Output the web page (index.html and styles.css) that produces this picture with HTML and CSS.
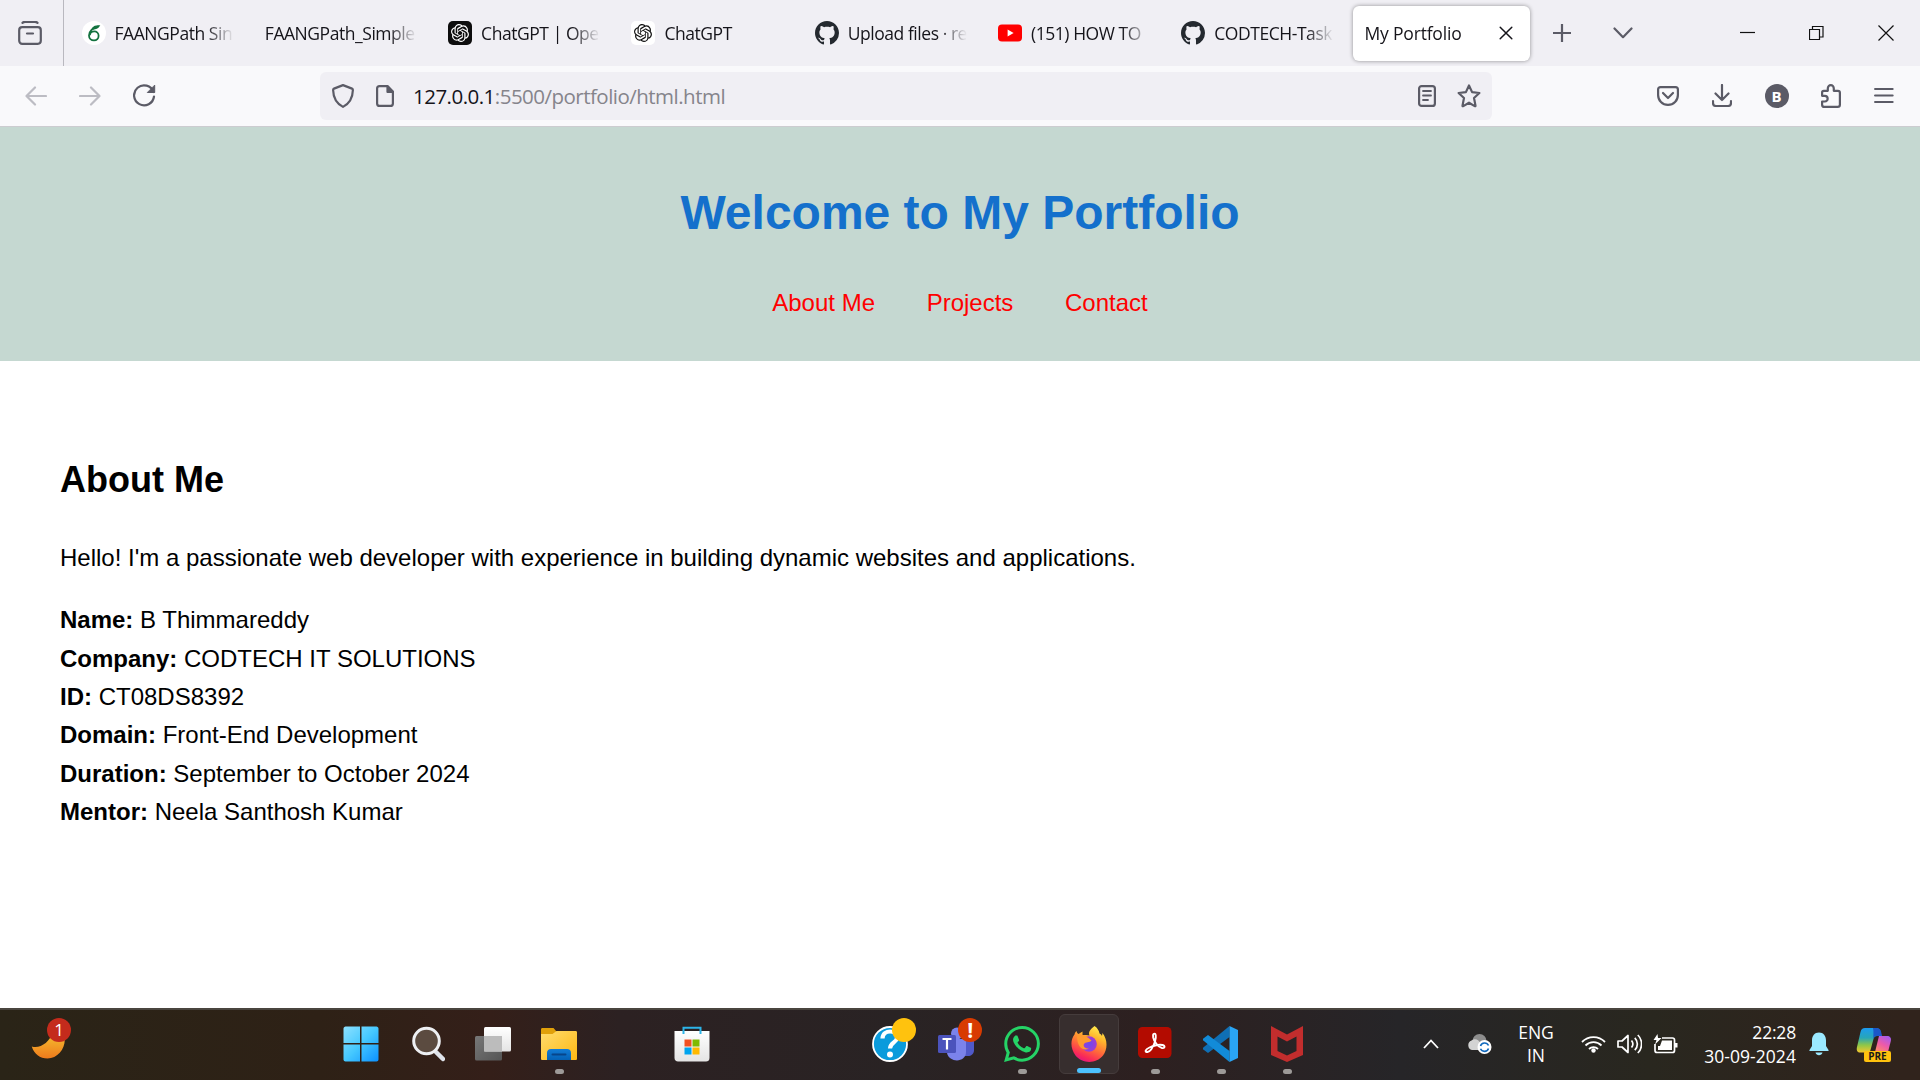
FILE: index.html
```html
<!DOCTYPE html>
<html lang="en">
<head>
<meta charset="utf-8">
<title>My Portfolio</title>
<link rel="stylesheet" href="styles.css">
</head>
<body>
<svg class="defs" aria-hidden="true">
  <defs>
    <symbol id="knot" viewBox="0 0 24 24">
      <path d="M22.28 9.82a5.98 5.98 0 0 0-.52-4.91 6.05 6.05 0 0 0-6.51-2.9A6.07 6.07 0 0 0 4.98 4.18a5.98 5.98 0 0 0-4 2.9 6.05 6.05 0 0 0 .74 7.1 5.98 5.98 0 0 0 .51 4.91 6.05 6.05 0 0 0 6.52 2.9A5.98 5.98 0 0 0 13.26 24a6.06 6.06 0 0 0 5.77-4.21 5.99 5.99 0 0 0 4-2.9 6.06 6.06 0 0 0-.75-7.07zm-9.02 12.61a4.48 4.48 0 0 1-2.88-1.04l.14-.08 4.78-2.76a.8.8 0 0 0 .39-.68v-6.74l2.02 1.17a.07.07 0 0 1 .04.05v5.58a4.5 4.5 0 0 1-4.49 4.5zm-9.66-4.13a4.47 4.47 0 0 1-.54-3.01l.14.09 4.78 2.76a.77.77 0 0 0 .78 0l5.84-3.37v2.33a.08.08 0 0 1-.03.06L9.74 19.95a4.5 4.5 0 0 1-6.14-1.65zM2.34 7.9a4.49 4.49 0 0 1 2.37-1.98V11.6a.77.77 0 0 0 .39.68l5.81 3.35-2.02 1.17a.08.08 0 0 1-.07 0l-4.83-2.79A4.5 4.5 0 0 1 2.34 7.87zm16.6 3.85-5.84-3.39L15.12 7.2a.08.08 0 0 1 .07 0l4.83 2.79a4.49 4.49 0 0 1-.68 8.1v-5.67a.79.79 0 0 0-.4-.67zm2.01-3.02-.14-.09-4.77-2.78a.78.78 0 0 0-.79 0L9.41 9.23V6.9a.07.07 0 0 1 .03-.06l4.83-2.79a4.5 4.5 0 0 1 6.68 4.66zM8.31 12.86l-2.02-1.16a.08.08 0 0 1-.04-.06V6.07a4.5 4.5 0 0 1 7.38-3.45l-.14.08-4.78 2.76a.8.8 0 0 0-.4.68zm1.1-2.36 2.6-1.5 2.6 1.5v3l-2.6 1.5-2.6-1.5z"/>
    </symbol>
    <symbol id="octocat" viewBox="0 0 16 16">
      <path d="M8 0C3.58 0 0 3.58 0 8c0 3.54 2.29 6.53 5.47 7.59.4.07.55-.17.55-.38 0-.19-.01-.82-.01-1.49-2.01.37-2.53-.49-2.69-.94-.09-.23-.48-.94-.82-1.13-.28-.15-.68-.52-.01-.53.63-.01 1.08.58 1.23.82.72 1.21 1.87.87 2.33.66.07-.52.28-.87.51-1.07-1.78-.2-3.64-.89-3.64-3.95 0-.87.31-1.59.82-2.15-.08-.2-.36-1.02.08-2.12 0 0 .67-.21 2.2.82.64-.18 1.32-.27 2-.27s1.36.09 2 .27c1.53-1.04 2.2-.82 2.2-.82.44 1.1.16 1.92.08 2.12.51.56.82 1.27.82 2.15 0 3.07-1.87 3.75-3.65 3.95.29.25.54.73.54 1.48 0 1.07-.01 1.93-.01 2.2 0 .21.15.46.55.38A8.01 8.01 0 0 0 16 8c0-4.42-3.58-8-8-8z"/>
    </symbol>
    <linearGradient id="moonFill" x1="0" y1="0" x2="0" y2="1"><stop offset="0" stop-color="#f5c030"/><stop offset="1" stop-color="#ee7a1c"/></linearGradient>
    <linearGradient id="winFill" gradientUnits="userSpaceOnUse" x1="0" y1="0" x2="36" y2="36"><stop offset="0" stop-color="#8fe2ff"/><stop offset=".5" stop-color="#45c8ff"/><stop offset="1" stop-color="#0a8fff"/></linearGradient>
    <linearGradient id="greyFill" x1="0" y1="0" x2="1" y2="1"><stop offset="0" stop-color="#777"/><stop offset="1" stop-color="#555"/></linearGradient>
    <linearGradient id="folderFill" x1="0" y1="0" x2="1" y2="1"><stop offset="0" stop-color="#ffdc6e"/><stop offset="1" stop-color="#fdb813"/></linearGradient>
    <linearGradient id="folderTab" x1="0" y1="0" x2="0" y2="1"><stop offset="0" stop-color="#127cd6"/><stop offset="1" stop-color="#0461b5"/></linearGradient>
    <linearGradient id="bagFill" x1="0" y1="0" x2="0" y2="1"><stop offset="0" stop-color="#fff"/><stop offset="1" stop-color="#e4e4e4"/></linearGradient>
    <linearGradient id="foxFill" x1=".75" y1="0" x2=".3" y2="1"><stop offset="0" stop-color="#fff04f"/><stop offset=".3" stop-color="#ffb52c"/><stop offset=".6" stop-color="#ff6a3a"/><stop offset=".85" stop-color="#fa2a58"/><stop offset="1" stop-color="#e01484"/></linearGradient>
    <radialGradient id="globeFill"><stop offset="0" stop-color="#6a4af0"/><stop offset="1" stop-color="#a23cd0"/></radialGradient>
    <linearGradient id="copilotA" x1=".2" y1="0" x2=".2" y2="1"><stop offset="0" stop-color="#1c9af0"/><stop offset=".4" stop-color="#27a6b8"/><stop offset=".7" stop-color="#8fc748"/><stop offset="1" stop-color="#f5c62c"/></linearGradient>
    <linearGradient id="copilotB" x1=".8" y1="0" x2=".3" y2="1"><stop offset="0" stop-color="#a45cf0"/><stop offset=".5" stop-color="#ee5aa8"/><stop offset="1" stop-color="#ff9360"/></linearGradient>
  </defs>
</svg>

<div class="screen">
  <div class="tabstrip">
    <div class="recent">
      <svg width="24" height="24" viewBox="0 0 24 24" class="line"><path d="M4.500 1.900C5 1 6 .9 7 .9h10c1 0 2 .1 2.500 1"/><rect x="1.200" y="6.200" width="21.600" height="16.600" rx="3"/><path d="M9 12.500h6"/></svg>
    </div>
    <div class="tabs">
      <div class="tab"><svg class="fav" viewBox="0 0 24 24"><circle cx="12" cy="12" r="12" fill="#fff"/><path d="M16.500 5.500C11 6 7 10.500 7 14.500c0 3 2.200 4.900 5 4.900s4.600-2.100 4.600-4.700-2-4.400-4.300-4.400c-2.600 0-4.400 1.900-4.400 4" fill="none" stroke="#13723f" stroke-width="1.800"/><path d="M10 7C12 4.500 15 4 18.300 4.400 16.800 6.700 14.500 8.500 10.800 8.700z" fill="#13723f"/></svg><span class="title">FAANGPath Sin</span></div>
      <div class="tab"><span class="title">FAANGPath_Simple</span></div>
      <div class="tab"><svg class="fav" viewBox="0 0 24 24"><rect width="24" height="24" rx="5" fill="#0d0d0d"/><use href="#knot" x="3" y="3" width="18" height="18" fill="#fff"/></svg><span class="title">ChatGPT | Oper</span></div>
      <div class="tab"><svg class="fav" viewBox="0 0 24 24"><rect width="24" height="24" rx="5" fill="#fff"/><use href="#knot" x="3" y="3" width="18" height="18" fill="#111"/></svg><span class="title">ChatGPT</span></div>
      <div class="tab"><svg class="fav" viewBox="0 0 24 24"><use href="#octocat" width="24" height="24" fill="#24292f"/></svg><span class="title">Upload files · re</span></div>
      <div class="tab"><svg class="fav" viewBox="0 0 24 24"><rect y="3.500" width="24" height="17" rx="4" fill="#f00"/><path d="M9.600 8.500v7l6-3.500z" fill="#fff"/></svg><span class="title">(151) HOW TO</span></div>
      <div class="tab"><svg class="fav" viewBox="0 0 24 24"><use href="#octocat" width="24" height="24" fill="#24292f"/></svg><span class="title">CODTECH-Task</span></div>
      <div class="tab active"><span class="title">My Portfolio</span><svg width="14" height="14" viewBox="0 0 14 14" class="line dark"><path d="M1.200 1.200l11.600 11.600M12.800 1.200L1.200 12.800"/></svg></div>
    </div>
    <div class="tabtools">
      <svg width="18" height="18" viewBox="0 0 18 18" class="line"><path d="M9 0v18M0 9h18"/></svg>
      <svg width="20" height="12" viewBox="0 0 20 12" class="line"><path d="M1.500 1.500L10 10.200l8.500-8.700"/></svg>
    </div>
    <div class="winbtns">
      <svg width="15" height="16" viewBox="0 0 15 16" class="thin"><path d="M0 7.500h15"/></svg>
      <svg width="15" height="16" viewBox="0 0 15 16" class="thin"><path d="M.5 4.500h10v10H.5zM3.500 4.500v-3h10.500v10.500h-3.500"/></svg>
      <svg width="16" height="16" viewBox="0 0 16 16" class="thin"><path d="M.5.500l15 15M15.500.500l-15 15"/></svg>
    </div>
  </div>

  <div class="toolbar">
    <div class="nav-icons">
      <svg width="22" height="22" viewBox="0 0 22 22" class="line pale"><path d="M21 11H1.500M10 2.500L1.500 11l8.500 8.500"/></svg>
      <svg width="22" height="22" viewBox="0 0 22 22" class="line pale"><path d="M1 11h19.500M12 2.500l8.500 8.500-8.500 8.500"/></svg>
      <svg width="23" height="23" viewBox="0 0 23 23" class="line"><path d="M20.500 8A10 10 0 1 0 21 12.500"/><path d="M21.700 1.500v7h-7z" fill="#5b5b66" stroke-width="1"/></svg>
    </div>
    <div class="urlbar">
      <svg width="22" height="24" viewBox="0 0 22 24" class="line"><path d="M11 1.100L20 4.600c.7.300.9.700.9 1.400C20.700 13.500 17.500 19.500 11 22.900 4.500 19.500 1.300 13.500 1.100 6c0-.7.200-1.100.9-1.400z"/></svg>
      <svg width="18" height="22" viewBox="0 0 18 22" class="line page"><path d="M11.500 1.100H3.600C2 1.100 1.100 2 1.100 3.600v14.800c0 1.600.9 2.500 2.500 2.500h10.800c1.600 0 2.500-.9 2.500-2.500V6.500z"/><path d="M11.500 1.500V7h5z" fill="#5b5b66"/></svg>
      <span class="url"><b>127.0.0.1</b>:5500/portfolio/html.html</span>
      <svg width="18" height="22" viewBox="0 0 18 22" class="line"><rect x="1.100" y="1.100" width="15.800" height="19.800" rx="2.500"/><path d="M5 6h8M5 10.500h8M5 15h5" stroke-width="1.800"/></svg>
      <svg width="24" height="24" viewBox="0 0 24 24" class="line star"><path d="M12 1.500l3.100 6.600 7.300.9-5.400 5 1.500 7.600c.1.600-.3.800-.8.500L12 18.700l-5.700 3.400c-.5.300-.9.100-.8-.5L7 14 1.600 9l7.300-.9z"/></svg>
    </div>
    <div class="ext-icons">
      <svg width="22" height="20" viewBox="0 0 22 20" class="line"><path d="M3.500 1.100h15c1.500 0 2.400.9 2.400 2.400v5.400c0 5.600-4.300 10-9.900 10s-9.900-4.400-9.900-10V3.500c0-1.500.9-2.400 2.400-2.400z"/><path d="M6 7l5 5 5-5"/></svg>
      <svg width="20" height="23" viewBox="0 0 20 23" class="line"><path d="M10 1v15M3.500 9.500L10 16l6.500-6.500M1 17v2c0 2 .9 3 3 3h12c2.100 0 3-1 3-3v-2"/></svg>
      <span class="avatar">B</span>
      <svg width="20" height="24" viewBox="0 0 20 24" class="line"><path d="M1.100 8.500c0-1.200.5-1.700 1.700-1.700h4V4.500c0-4.500 6-4.500 6 0v2.300h4.200c1.300 0 1.900.6 1.900 1.900v12c0 1.500-.6 2.200-2.200 2.200H3.300c-1.500 0-2.200-.7-2.200-2.200v-3.200h2.700c3.800 0 3.800-5.700 0-5.700H1.100z"/></svg>
      <svg width="20" height="18" viewBox="0 0 20 18" class="line"><path d="M1.100 2h17.500M1.100 8.500h17.500M1.100 15h17.500"/></svg>
    </div>
  </div>

  <main class="page-view">
    <header class="hero">
      <h1>Welcome to My Portfolio</h1>
      <ul>
        <li><a>About Me</a></li>
        <li><a>Projects</a></li>
        <li><a>Contact</a></li>
      </ul>
    </header>
    <section class="about">
      <h2>About Me</h2>
      <p>Hello! I'm a passionate web developer with experience in building dynamic websites and applications.</p>
      <p><strong>Name:</strong> B Thimmareddy<br>
      <strong>Company:</strong> CODTECH IT SOLUTIONS<br>
      <strong>ID:</strong> CT08DS8392<br>
      <strong>Domain:</strong> Front-End Development<br>
      <strong>Duration:</strong> September to October 2024<br>
      <strong>Mentor:</strong> Neela Santhosh Kumar</p>
    </section>
  </main>

  <footer class="taskbar">
    <div class="widget">
      <svg width="36" height="36" viewBox="0 0 36 36"><path d="M.8 20.500C9 23 19 16 21 7l12 1c3.500 12-5 24.500-16.500 24.500C9 32.500 3 28 .8 20.500z" fill="url(#moonFill)"/></svg>
      <span class="badge red">1</span>
    </div>
    <div class="apps">
      <div class="app"><svg viewBox="0 0 36 36"><path d="M2.500.500H17V17H.5V2.500c0-1 1-2 2-2zM18.500.500h15c1 0 2 1 2 2V17h-17zM.5 18.500H17v17H2.500c-1 0-2-1-2-2zM18.500 18.500h17v15c0 1-1 2-2 2h-15z" fill="url(#winFill)"/></svg></div>
      <div class="app"><svg viewBox="0 0 36 36"><path d="M27 26l7 7" stroke="#dfe3ea" stroke-width="4.500" stroke-linecap="round"/><circle cx="17.500" cy="15" r="12.800" fill="#5b4b40" stroke="#eef0f3" stroke-width="3"/></svg></div>
      <div class="app"><svg viewBox="0 0 36 36"><rect y="10" width="27" height="24.500" rx="1.500" fill="url(#greyFill)"/><rect x="9" y="1" width="27" height="24.500" rx="1.500" fill="url(#bagFill)"/><path d="M9 10h18v15.500H9z" fill="#bcbcbc"/></svg></div>
      <div class="app run"><svg viewBox="0 0 36 36"><path d="M1.500 2h11l3 3.500L12 10H0V3.500C0 2.500.500 2 1.500 2z" fill="#e0a00a"/><path d="M0 8h11.500l4-3H34.500c1 0 1.500.5 1.500 1.500v26c0 1-.5 1.500-1.500 1.500h-33C.5 34 0 33.500 0 32.500z" fill="url(#folderFill)"/><path d="M6 34v-7c0-2.500 1.500-4 4-4h16c2.500 0 4 1.500 4 4v7z" fill="url(#folderTab)"/><path d="M11.500 28.500h13" stroke="#07458a" stroke-width="2" stroke-linecap="round"/></svg></div>
      <div class="app"></div>
      <div class="app"><svg viewBox="0 0 36 36"><path d="M.5 5h35v27c0 2.500-1.500 3.500-3.500 3.500H4C2 35.500.5 34 .5 32z" fill="url(#bagFill)"/><path d="M9.500 8V1.700h17V8" fill="none" stroke="#2cb4e8" stroke-width="2"/><path d="M10.500 13.500h7v7h-7z" fill="#f25022"/><path d="M18.500 13.500h7v7h-7z" fill="#7fba00"/><path d="M10.500 21.500h7v7h-7z" fill="#00a4ef"/><path d="M18.500 21.500h7v7h-7z" fill="#ffb900"/></svg></div>
      <div class="app"></div>
      <div class="app"></div>
      <div class="app"><svg viewBox="0 0 36 36"><circle cx="18" cy="18" r="17" fill="#0a9bdc" stroke="#fff" stroke-width="1.800"/><path d="M10.500 12.500c.5-9.500 15-9 14.500-.500-.3 4.500-7 4.500-7 10.500" fill="none" stroke="#fff" stroke-width="4.200"/><circle cx="18" cy="28.500" r="3" fill="#fff"/></svg><span class="badge yellow"></span></div>
      <div class="app"><svg viewBox="0 0 36 36"><circle cx="30" cy="9" r="4" fill="#5059c9"/><path d="M24 13h12v11c0 4-3 6-6 6h-6z" fill="#5059c9"/><circle cx="19" cy="7.500" r="6" fill="#7b83eb"/><path d="M9 13h19v13c0 11-17 11-19 1z" fill="#7b83eb"/><rect y="9" width="18" height="18" rx="1.500" fill="#4b53bc"/><path d="M4.500 13h9M9 13v10.500" stroke="#fff" stroke-width="2.200"/></svg><span class="badge orange">!</span></div>
      <div class="app run"><svg viewBox="0 0 24 24"><path fill="#25d366" d="M17.470 14.380c-.3-.15-1.760-.87-2.030-.97-.27-.1-.47-.15-.67.150-.2.300-.77.970-.94 1.160-.17.200-.35.220-.64.080-.3-.15-1.260-.47-2.390-1.480-.88-.79-1.480-1.760-1.650-2.060-.17-.3-.02-.46.130-.6.130-.14.300-.35.450-.52.150-.17.200-.3.300-.5.100-.2.050-.37-.03-.52-.07-.15-.67-1.610-.91-2.210-.24-.58-.49-.5-.67-.51h-.57c-.2 0-.52.070-.79.370-.27.300-1.040 1.020-1.040 2.480 0 1.460 1.070 2.880 1.210 3.070.15.200 2.100 3.200 5.080 4.490.71.310 1.260.49 1.690.63.710.23 1.360.19 1.870.12.570-.09 1.760-.72 2.010-1.410.25-.7.250-1.290.17-1.410-.07-.13-.27-.2-.57-.35M12.050 21.790a9.870 9.870 0 0 1-5.030-1.380l-.36-.21-3.740.98 1-3.650-.24-.37a9.860 9.860 0 0 1-1.510-5.260c0-5.450 4.440-9.880 9.890-9.880a9.830 9.830 0 0 1 9.880 9.890c0 5.450-4.440 9.880-9.890 9.880m8.410-18.300A11.820 11.820 0 0 0 12.050 0C5.500 0 .16 5.340.16 11.890c0 2.100.55 4.140 1.590 5.950L.060 24l6.300-1.650a11.880 11.880 0 0 0 5.680 1.450c6.560 0 11.890-5.340 11.890-11.890a11.820 11.820 0 0 0-3.470-8.420"/></svg></div>
      <div class="app current"><svg viewBox="0 0 36 36"><path d="M23.500 0c3 2 4.500 4.500 5 7.500 1.200.5 2 1.500 2.500 2.500l.5-3c5.500 7 5 16.500.5 22.500C25 38 11.500 38 4.500 29.500-1 22-.5 13.500 3.500 8.500c.3-1.500 1-2.500 2-3.500.3 1.500 1 2.500 2 3l4-2.500v3.500c2 0 5-.5 7 .5-2-4 2.500-7.500 5-9.500z" fill="url(#foxFill)"/><circle cx="18" cy="18" r="7.800" fill="url(#globeFill)"/><path d="M6 9.500c4-2 9-.5 14.500 5-2 2.500-6 1-7.500 3.500-1.500 2.500 2 5 5 4.500-6 3-12-1-12-13z" fill="#ff9a2e"/></svg></div>
      <div class="app run"><svg viewBox="0 0 36 36"><rect x="1" y="1" width="33.500" height="31" rx="4.500" fill="#b30b00"/><path d="M16.500 8c2.500-1.500 3 2.500 1.500 7.500-1.500 4.500-4 10-7.500 10.500-3 .3-2.500-2.500 2-4.500s9-3.500 13-2.500c3 1 2.500 3.500-.5 3-4-.8-8-6.500-8.800-10.500-.3-1.800-.3-3 .3-3.500z" fill="none" stroke="#fff" stroke-width="1.900"/></svg></div>
      <div class="app run"><svg viewBox="0 0 36 36"><path d="M26.500 0v11L5 27 .3 23.500c-.5-.5-.5-1.500 0-2z" fill="#0f6fb5"/><path d="M26.500 36V25L5 9 .3 12.500c-.5.500-.5 1.500 0 2z" fill="#128bd8"/><path d="M26.500 0L35 4v28l-8.500 4z" fill="#2aa5f4"/></svg></div>
      <div class="app run"><svg viewBox="0 0 36 36"><path d="M2 0l16 8.500L34 0v29L18 36 2 29zM8.500 10.500V25L18 29.500 27.500 25V10.500L18 15.500z" fill="#c22d2d" fill-rule="evenodd"/></svg></div>
    </div>
    <div class="tray">
      <svg class="chev" width="16" height="10" viewBox="0 0 16 10"><path d="M1 9l7-7.500L15 9" fill="none" stroke="#fff" stroke-width="1.800"/></svg>
      <svg class="cloud" width="25" height="22" viewBox="0 0 25 22"><circle cx="12.500" cy="8" r="7" fill="#8d8d8d"/><path d="M5 17a5 5 0 0 1-.5-9.500C8 5 12 7 13 10l6-1v8z" fill="#d3d3d3"/><circle cx="17.500" cy="14" r="7" fill="#fff"/><path d="M13.500 13a4.300 4.300 0 0 1 8-.5M21.500 15.500a4.300 4.300 0 0 1-8 .3" fill="none" stroke="#1169bd" stroke-width="1.600"/></svg>
      <div class="lang"><span>ENG</span><span>IN</span></div>
      <svg class="wifi" width="25" height="18" viewBox="0 0 25 18"><g fill="none" stroke="#fff" stroke-width="1.800"><path d="M1 7a16 16 0 0 1 23 0M4.500 10.500a11.300 11.300 0 0 1 16 0M8 14a6.500 6.500 0 0 1 9 0"/></g><circle cx="12.500" cy="15.500" r="2.200" fill="#fff"/></svg>
      <svg class="vol" width="25" height="20" viewBox="0 0 25 20"><g fill="none" stroke="#fff" stroke-width="1.700" stroke-linejoin="round"><path d="M1 7h4l6-5.500v17L5 13H1zM14.500 6.500c1.600 2 1.600 5 0 7M17.800 3.800c3.400 3.600 3.400 8.800 0 12.400M20.800 1c5 5 5 13 0 18"/></g></svg>
      <svg class="batt" width="25" height="20" viewBox="0 0 25 20"><path d="M9 4h10.500c1.400 0 2 .6 2 2v10.500c0 1.400-.6 2-2 2H4c-1.400 0-2-.6-2-2V10" fill="none" stroke="#fff" stroke-width="1.700"/><path d="M9 6.500h10v9.500H5V12h2zM22 9h2.500v4.500H22zM4.500 0L.5 6h3L2 10.500 8.500 4H5z" fill="#fff"/></svg>
      <div class="clock"><span>22:28</span><span class="date">30-09-2024</span></div>
      <svg class="bell" width="20" height="24" viewBox="0 0 20 24"><path d="M10 .5c4.500 0 7 3.500 7 8V14l2.500 4c.3.500 0 1-.5 1H1c-.5 0-.8-.5-.5-1L3 14V8.500c0-4.500 2.500-8 7-8zM6.500 20.500h7c-.8 3.500-6.200 3.500-7 0z" fill="#9be9ff"/></svg>
      <div class="copilot">
        <svg width="36" height="32" viewBox="0 0 36 32"><path d="M9 1h11c2.500 0 4 1.500 4.500 3.500L25.500 9H21c-2 0-3 1-3.500 3l-3 11c-.5 2-1.500 2.500-3.500 2.500H4C1 25.500.3 23 1 20L4.500 5C5 2.500 6.500 1 9 1z" fill="url(#copilotA)"/><path d="M17 1h3.500c2.500 0 4 1.500 4.500 3.500L26 9h-5c-2 0-3 1-3.500 3C17 8 18 5 17 1z" fill="#1b57c8"/><path d="M23 9h8c3 0 4.500 2 3.800 5L32 25c-.5 1.500-1 2-2.500 2H18.500z" fill="url(#copilotB)"/></svg>
        <span class="pre">PRE</span>
      </div>
    </div>
  </footer>
</div>
</body>
</html>
```
FILE: styles.css
```css
* { box-sizing: border-box; }

body {
  margin: 0;
  background: #fff;
  font-family: "Open Sans", "Noto Sans", sans-serif;
}

.defs { position: absolute; width: 0; height: 0; }

.screen {
  display: flex;
  flex-direction: column;
  width: 1920px;
  height: 1080px;
  overflow: hidden;
}

svg { display: block; flex: none; }

.line {
  fill: none;
  stroke: #5b5b66;
  stroke-width: 2.200;
  stroke-linecap: round;
  stroke-linejoin: round;
}
.line.pale { stroke: #bcbcc3; }
.line.dark { stroke: #15141a; stroke-width: 1.500; }
.thin { fill: none; stroke: #111; stroke-width: 1.200; }

/* Tab strip */
.tabstrip {
  display: flex;
  align-items: center;
  height: 66px;
  background: #f0eff4;
}
.recent {
  display: flex;
  align-items: center;
  width: 64px;
  height: 66px;
  padding-left: 18px;
  border-right: 1px solid #b9b8bf;
}
.tabs { display: flex; gap: 6px; margin-left: 5.500px; }
.tab {
  display: flex;
  align-items: center;
  width: 177.300px;
  height: 55px;
  padding: 0 13px 0 12px;
  border-radius: 6px;
  font-size: 17.500px;
  letter-spacing: -0.450px;
  color: #15141a;
}
.fav { width: 24px; height: 24px; margin-right: 9px; }
.title {
  flex: 1;
  min-width: 0;
  overflow: hidden;
  white-space: nowrap;
  -webkit-mask-image: linear-gradient(to left, transparent, #000 28px);
  mask-image: linear-gradient(to left, transparent, #000 28px);
}
.tab.active {
  padding-right: 17px;
  background: #fff;
  box-shadow: 0 0 4px rgba(0, 0, 0, 0.4);
  letter-spacing: -0.200px;
}
.tabtools { display: flex; align-items: center; gap: 42px; margin-left: 23px; }
.winbtns { display: flex; gap: 54px; margin-left: auto; padding-right: 26px; }

/* Address toolbar */
.toolbar {
  display: flex;
  align-items: center;
  height: 61px;
  padding-bottom: 1px;
  background: #f9f9fb;
  border-bottom: 1px solid #ccccd0;
}
.nav-icons { display: flex; align-items: center; gap: 32px; width: 320px; padding-left: 25px; }
.urlbar {
  display: flex;
  align-items: center;
  width: 1172px;
  height: 48px;
  padding: 0 11px 0 12px;
  border-radius: 6px;
  background: #f0eff4;
}
.page { margin-left: 22px; }
.url {
  flex: 1;
  margin-left: 19px;
  padding-top: 1px;
  font-size: 20.500px;
  letter-spacing: -0.520px;
  color: #85848b;
}
.url b { font-weight: 400; color: #15141a; }
.star { margin-left: 21px; }
.ext-icons {
  display: flex;
  flex: 1;
  align-items: center;
  justify-content: space-between;
  padding: 0 26px 0 165px;
}
.avatar {
  width: 24px;
  height: 24px;
  border-radius: 50%;
  background: #5b5b66;
  color: #fff;
  font-size: 15px;
  font-weight: 700;
  line-height: 24px;
  text-align: center;
}

/* Portfolio page */
.page-view {
  flex: 1;
  font: 24px/1.6 "Liberation Sans", Arial, sans-serif;
  color: #000;
}
.hero { height: 234px; padding: 16px 15px 14px; background: #c5d8d1; text-align: center; overflow: hidden; }
.hero h1 { margin: 0.670em 0; font-size: 48px; color: #1470cc; }
.hero ul { margin: 0 0 24px; padding: 0; list-style: none; }
.hero li { display: inline-block; margin: 0 22.500px; }
.hero a { color: #f00; }
.about { padding: 60.500px 60px; overflow: hidden; }
.about h2 { margin: 0.830em 0; font-size: 36px; }
.about p { margin: 24px 0; }

/* Taskbar */
.taskbar {
  display: flex;
  align-items: center;
  height: 72px;
  padding-bottom: 2px;
  border-top: 2px solid #4a453f;
  background: linear-gradient(90deg, #2a2417 0, #2e2116 320px, #341f19 490px, #2c2122 620px, #292324 900px, #2d2020 1150px, #262528 1400px, #29271f 1650px, #30231c 1900px);
  color: #fff;
}
.widget { position: relative; width: 328px; padding-left: 31px; }
.badge {
  position: absolute;
  width: 24px;
  height: 24px;
  border-radius: 50%;
  font-size: 17px;
  line-height: 24px;
  text-align: center;
}
.red { left: 47px; top: -8px; background: #c42b1c; }
.yellow { left: 35px; top: 4px; background: #ffc20e; }
.orange { left: 35px; top: 4px; background: #d83b01; font-size: 21px; font-weight: 700; }
.apps { display: flex; }
.app {
  position: relative;
  display: flex;
  align-items: center;
  justify-content: center;
  width: 66.150px;
  height: 60px;
}
.app svg { width: 36px; height: 36px; }
.app.run::after,
.app.current::after {
  content: "";
  position: absolute;
  left: 29px;
  bottom: 0;
  width: 9px;
  height: 5px;
  border-radius: 3px;
  background: #9d9a98;
}
.app.current {
  width: 60px;
  margin: 0 3px;
  border: 1px solid #453c3c;
  border-radius: 6px;
  background: #372e2e;
}
.app.current::after { left: 17px; bottom: 0; width: 24px; background: #4cc2ff; }
.tray { display: flex; align-items: center; margin-left: 103px; }
.lang, .clock {
  display: flex;
  flex-direction: column;
  font-size: 17.500px;
  line-height: 23px;
}
.cloud { margin-left: 28px; }
.lang { align-items: center; width: 48px; margin-left: 20px; }
.wifi { margin-left: 21px; }
.vol, .batt { margin-left: 11px; }
.clock { align-items: flex-end; width: 110px; margin-left: 8px; line-height: 24px; letter-spacing: -0.200px; }
.date { letter-spacing: 0.050px; }
.bell { margin-left: 13px; }
.copilot { position: relative; margin-left: 27px; width: 36px; height: 35px; }
.pre {
  position: absolute;
  left: 8px;
  bottom: 0;
  width: 27px;
  height: 11px;
  border-radius: 2px;
  background: #ffc20e;
  color: #1a1a1a;
  font-size: 10px;
  font-weight: 700;
  line-height: 11px;
  text-align: center;
}
```
